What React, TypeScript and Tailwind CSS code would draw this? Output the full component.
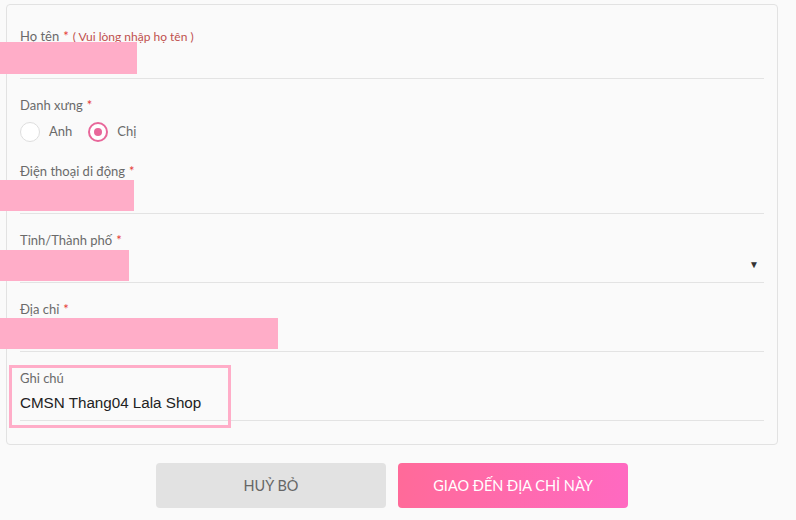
import { ReactNode } from "react";

const labelFont = { fontFamily: "Lato, 'Noto Sans', sans-serif" };

function Req() {
  return <span className="ml-1 text-[#e53935]">*</span>;
}

function Field({ label, children }: { label: ReactNode; children?: ReactNode }) {
  return (
    <div className="mb-[18px] border-b border-[#e3e3e3] last:mb-0">
      <div className="h-4 text-[13px] leading-4 text-[#6a6a6a]">{label}</div>
      <div className="relative flex h-[34px] items-center">{children}</div>
    </div>
  );
}

function Radio({ label, checked }: { label: string; checked?: boolean }) {
  return (
    <label className="flex items-center gap-[9px]">
      <span
        className={`flex h-5 w-5 items-center justify-center rounded-full border bg-white ${
          checked ? "border-2 border-[#e8679a]" : "border-[#dedede]"
        }`}
      >
        {checked ? <span className="h-2 w-2 rounded-full bg-[#e8679a]" /> : null}
      </span>
      <span className="text-[13px] text-[#6a6a6a]">{label}</span>
    </label>
  );
}

export default function App() {
  return (
    <div className="relative min-h-[520px] bg-[#fafafa] pt-1" style={labelFont}>
      <form className="ml-[6px] w-[772px] rounded-[4px] border border-[#e2e2e2] bg-[#fafafa] px-[13px] pt-[23px] pb-[23px]">
        <Field
          label={
            <>
              Họ tên<Req />
              <span className="ml-1 text-[12px] text-[#c0504d]">( Vui lòng nhập họ tên )</span>
            </>
          }
        />

        <div className="mb-[21px]">
          <div className="h-4 text-[13px] leading-4 text-[#6a6a6a]">
            Danh xưng<Req />
          </div>
          <div className="mt-[9px] flex h-5 items-center gap-4">
            <Radio label="Anh" />
            <Radio label="Chị" checked />
          </div>
        </div>

        <Field
          label={
            <>
              Điện thoại di động<Req />
            </>
          }
        />

        <Field
          label={
            <>
              Tỉnh/Thành phố<Req />
            </>
          }
        >
          <span className="absolute right-[5px] top-[11px] text-[10px] leading-none text-[#333]">▼</span>
        </Field>

        <Field
          label={
            <>
              Địa chỉ<Req />
            </>
          }
        />

        <Field label="Ghi chú">
          <span
            className="text-[15.2px] text-[#222]"
            style={{ fontFamily: "'Liberation Sans', Arial, sans-serif" }}
          >
            CMSN Thang04 Lala Shop
          </span>
        </Field>
      </form>

      <div className="ml-[6px] mt-[18px] flex w-[772px] justify-center gap-3">
        <button
          type="button"
          className="h-[45px] w-[230px] rounded-[4px] bg-[#e2e2e2] text-[14.5px] uppercase text-[#666]"
        >
          HUỶ BỎ
        </button>
        <button
          type="button"
          className="h-[45px] w-[230px] rounded-[4px] bg-gradient-to-r from-[#ff6a99] to-[#ff69c1] text-[14.5px] uppercase text-white"
        >
          GIAO ĐẾN ĐỊA CHỈ NÀY
        </button>
      </div>

      {/* redaction overlays */}
      <div className="absolute left-0 top-[42px] h-[32px] w-[137px] bg-[#ffadc8]" />
      <div className="absolute left-0 top-[180px] h-[31px] w-[134px] bg-[#ffadc8]" />
      <div className="absolute left-0 top-[250px] h-[31px] w-[129px] bg-[#ffadc8]" />
      <div className="absolute left-0 top-[318px] h-[31px] w-[278px] bg-[#ffadc8]" />
      <div className="absolute left-[9px] top-[365px] h-[63px] w-[222px] border-[3px] border-[#ffadc8]" />
    </div>
  );
}
